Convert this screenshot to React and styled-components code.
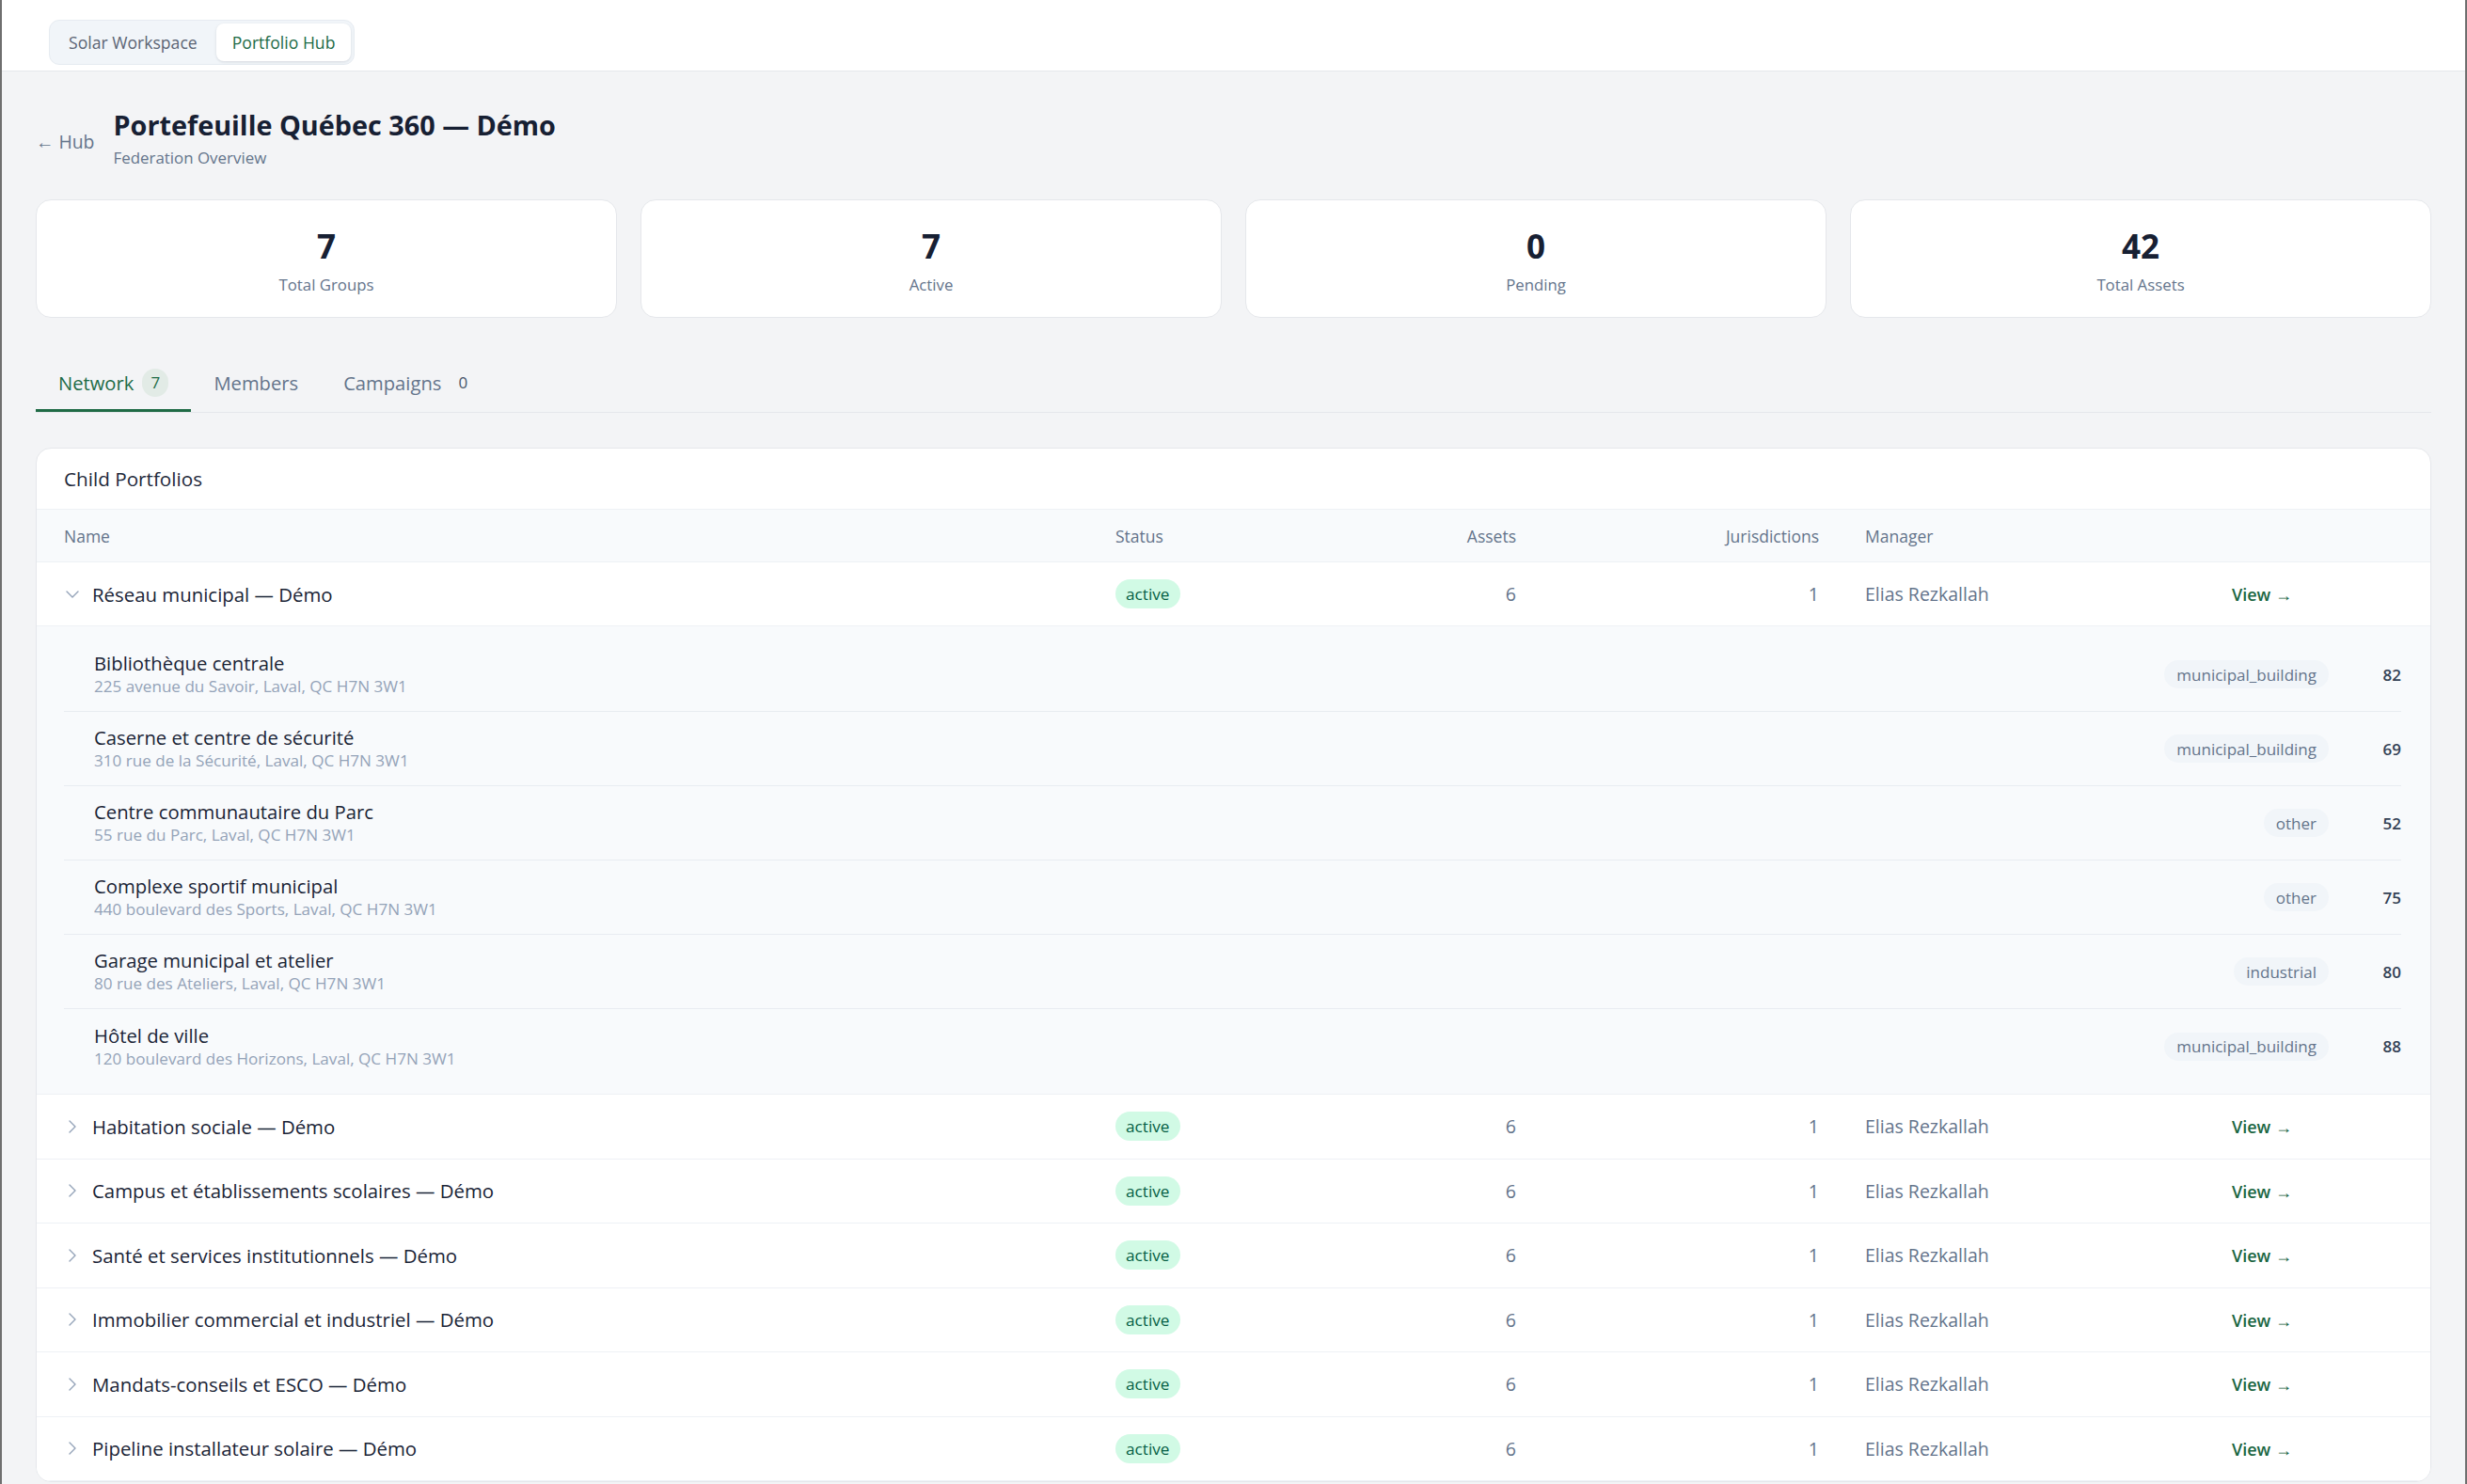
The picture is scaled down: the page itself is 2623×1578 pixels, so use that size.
import React from 'react';
import styled, { createGlobalStyle } from 'styled-components';
import { ChevronDown, ChevronRight } from 'lucide-react';

const GlobalStyle = createGlobalStyle`
  html, body { margin: 0; padding: 0; background: #f3f4f6; overflow: hidden; }
  body { font-family: "Open Sans", "Noto Sans", sans-serif; color: #1e293b; }
  * { box-sizing: border-box; }
`;

const Frame = styled.div`
  height: 1578px;
  border-left: 2px solid #6f6f6f;
  border-right: 2px solid #6f6f6f;
  background: #f3f4f6;
  display: flex;
  flex-direction: column;
  overflow: hidden;
`;

const TopBar = styled.header`
  flex-shrink: 0;
  height: 76px;
  background: #fff;
  border-bottom: 1px solid #e5e7eb;
  padding: 21px 50px 0;
`;

const Segmented = styled.div`
  display: inline-flex;
  gap: 3px;
  padding: 3px;
  height: 48px;
  background: #f1f5f9;
  border: 1px solid #e6ebf1;
  border-radius: 11px;
`;

const SegButton = styled.button`
  border: 0;
  border-radius: 8px;
  padding: 0 17px;
  font-family: inherit;
  font-size: 17.6px;
  font-weight: 500;
  color: ${(p) => (p.$active ? '#1d6b47' : '#5b6474')};
  background: ${(p) => (p.$active ? '#fff' : 'transparent')};
  box-shadow: ${(p) => (p.$active ? '0 1px 3px rgba(15,23,42,0.12)' : 'none')};
`;

const Main = styled.main`
  padding: 36px 36px 0;
  display: flex;
  flex-direction: column;
`;

const PageHeader = styled.div`
  display: flex;
  align-items: center;
  gap: 20px;
  margin-bottom: 31px;
`;

const BackLink = styled.a`
  font-size: 19.4px;
  color: #64748b;
  text-decoration: none;
  padding-top: 8px;
`;

const TitleBlock = styled.div`
  display: flex;
  flex-direction: column;
`;

const Title = styled.h1`
  margin: 0;
  font-size: 28.8px;
  line-height: 42px;
  font-weight: 700;
  color: #172033;
`;

const Subtitle = styled.div`
  font-size: 16.9px;
  line-height: 27px;
  color: #64748b;
`;

const StatGrid = styled.div`
  display: grid;
  grid-template-columns: repeat(4, 1fr);
  gap: 25px;
  margin-bottom: 40px;
`;

const StatCard = styled.div`
  height: 126px;
  background: #fff;
  border: 1px solid #e5e7eb;
  border-radius: 16px;
  display: flex;
  flex-direction: column;
  align-items: center;
  justify-content: center;
  gap: 9px;
  padding-top: 7px;
`;

const StatValue = styled.div`
  font-size: 35px;
  line-height: 40px;
  font-weight: 700;
  color: #172033;
`;

const StatLabel = styled.div`
  font-size: 16.8px;
  line-height: 24px;
  color: #64748b;
`;

const Tabs = styled.nav`
  display: flex;
  border-bottom: 1px solid #e5e7eb;
  margin-bottom: 37px;
`;

const Tab = styled.div`
  height: 60px;
  display: flex;
  align-items: center;
  gap: 9px;
  padding: 0 24px;
  border-bottom: 3px solid ${(p) => (p.$active ? '#1f6b45' : 'transparent')};
  font-size: 20.2px;
  font-weight: 500;
  color: ${(p) => (p.$active ? '#1d6b47' : '#64748b')};
`;

const TabCount = styled.span`
  min-width: 28px;
  height: 30px;
  padding: 0 8px;
  border-radius: 15px;
  display: inline-flex;
  align-items: center;
  justify-content: center;
  font-size: 17px;
  font-weight: 500;
  background: ${(p) => (p.$active ? '#e2ebe6' : 'transparent')};
  color: ${(p) => (p.$active ? '#1d6b47' : '#475569')};
`;

const Card = styled.section`
  background: #fff;
  border: 1px solid #e5e7eb;
  border-radius: 16px;
  overflow: hidden;
`;

const CardHeader = styled.div`
  height: 65px;
  display: flex;
  align-items: center;
  padding: 0 29px;
  border-bottom: 1px solid #eef1f5;
  font-size: 20.7px;
  font-weight: 500;
  color: #1e293b;
`;

const cols = '1118px 300px 126px 322px 439px 1fr';

const HeadRow = styled.div`
  display: grid;
  grid-template-columns: ${cols};
  align-items: center;
  height: 56px;
  padding: 0 30px 0 29px;
  background: #f8fafc;
  border-bottom: 1px solid #eef1f5;
  font-size: 17.5px;
  font-weight: 500;
  color: #64748b;
`;

const HeadCell = styled.div`
  text-align: ${(p) => (p.$right ? 'right' : 'left')};
  padding-left: ${(p) => (p.$pad ? '49px' : '0')};
`;

const Row = styled.div`
  display: grid;
  grid-template-columns: ${cols};
  align-items: center;
  height: ${(p) => p.$h || '68px'};
  padding: 0 30px 0 29px;
  background: #fff;
  border-bottom: 1px solid #eef1f5;
`;

const NameCell = styled.div`
  display: flex;
  align-items: center;
  gap: 9px;
  margin-left: -3px;
  font-size: 20.4px;
  font-weight: 500;
  color: #1a2436;
  svg { flex-shrink: 0; color: #94a3b8; }
`;

const Cell = styled.div`
  text-align: ${(p) => (p.$right ? 'right' : 'left')};
  padding-left: ${(p) => (p.$pad ? '49px' : '0')};
  font-size: 19.5px;
  color: #64748b;
`;

const Badge = styled.span`
  display: inline-flex;
  align-items: center;
  height: 31px;
  padding: 0 11px;
  border-radius: 16px;
  background: #d1fae5;
  color: #065f46;
  font-size: 17.2px;
  font-weight: 500;
`;

const ViewLink = styled.a`
  font-size: 18px;
  font-weight: 600;
  color: #1a6642;
  text-decoration: none;
`;

const SubList = styled.div`
  background: #f8fafc;
  padding: 12px 31px 11px 29px;
  border-bottom: 1px solid #eef1f5;
`;

const SubRow = styled.div`
  height: 79px;
  display: flex;
  align-items: center;
  justify-content: space-between;
  padding-left: 32px;
  border-bottom: 1px solid #e8ecf1;
  &:last-child { border-bottom: 0; }
`;

const SubInfo = styled.div`
  display: flex;
  flex-direction: column;
`;

const SubName = styled.div`
  font-size: 20.3px;
  line-height: 26px;
  font-weight: 500;
  color: #1a2436;
`;

const SubAddress = styled.div`
  font-size: 17.1px;
  line-height: 24px;
  color: #94a3b8;
`;

const SubMeta = styled.div`
  display: flex;
  align-items: center;
`;

const TypePill = styled.span`
  display: inline-flex;
  align-items: center;
  height: 30px;
  padding: 0 13px;
  border-radius: 15px;
  background: #f1f5f9;
  color: #64748b;
  font-size: 17px;
`;

const Score = styled.span`
  width: 77px;
  text-align: right;
  font-size: 17px;
  font-weight: 600;
  color: #334155;
`;

const stats = [
  { v: '7', l: 'Total Groups' },
  { v: '7', l: 'Active' },
  { v: '0', l: 'Pending' },
  { v: '42', l: 'Total Assets' },
];

const assets = [
  ['Bibliothèque centrale', '225 avenue du Savoir, Laval, QC H7N 3W1', 'municipal_building', '82'],
  ['Caserne et centre de sécurité', '310 rue de la Sécurité, Laval, QC H7N 3W1', 'municipal_building', '69'],
  ['Centre communautaire du Parc', '55 rue du Parc, Laval, QC H7N 3W1', 'other', '52'],
  ['Complexe sportif municipal', '440 boulevard des Sports, Laval, QC H7N 3W1', 'other', '75'],
  ['Garage municipal et atelier', '80 rue des Ateliers, Laval, QC H7N 3W1', 'industrial', '80'],
  ['Hôtel de ville', '120 boulevard des Horizons, Laval, QC H7N 3W1', 'municipal_building', '88'],
];

const groups = [
  'Habitation sociale — Démo',
  'Campus et établissements scolaires — Démo',
  'Santé et services institutionnels — Démo',
  'Immobilier commercial et industriel — Démo',
  'Mandats-conseils et ESCO — Démo',
  'Pipeline installateur solaire — Démo',
];

function GroupRow({ name, open }) {
  return (
    <Row $h={open ? '68px' : '68.5px'}>
      <NameCell>
        {open ? <ChevronDown size={24} strokeWidth={1.4} /> : <ChevronRight size={24} strokeWidth={1.4} />}
        {name}
      </NameCell>
      <Cell><Badge>active</Badge></Cell>
      <Cell $right>6</Cell>
      <Cell $right>1</Cell>
      <Cell $pad>Elias Rezkallah</Cell>
      <Cell><ViewLink href="#">View →</ViewLink></Cell>
    </Row>
  );
}

export default function App() {
  return (
    <>
      <GlobalStyle />
      <Frame>
        <TopBar>
          <Segmented>
            <SegButton>Solar Workspace</SegButton>
            <SegButton $active>Portfolio Hub</SegButton>
          </Segmented>
        </TopBar>
        <Main>
          <PageHeader>
            <BackLink href="#">← Hub</BackLink>
            <TitleBlock>
              <Title>Portefeuille Québec 360 — Démo</Title>
              <Subtitle>Federation Overview</Subtitle>
            </TitleBlock>
          </PageHeader>
          <StatGrid>
            {stats.map((s) => (
              <StatCard key={s.l}>
                <StatValue>{s.v}</StatValue>
                <StatLabel>{s.l}</StatLabel>
              </StatCard>
            ))}
          </StatGrid>
          <Tabs>
            <Tab $active>Network <TabCount $active>7</TabCount></Tab>
            <Tab>Members</Tab>
            <Tab>Campaigns <TabCount>0</TabCount></Tab>
          </Tabs>
          <Card>
            <CardHeader>Child Portfolios</CardHeader>
            <HeadRow>
              <HeadCell>Name</HeadCell>
              <HeadCell>Status</HeadCell>
              <HeadCell $right>Assets</HeadCell>
              <HeadCell $right>Jurisdictions</HeadCell>
              <HeadCell $pad>Manager</HeadCell>
              <HeadCell />
            </HeadRow>
            <GroupRow name="Réseau municipal — Démo" open />
            <SubList>
              {assets.map(([n, a, t, s]) => (
                <SubRow key={n}>
                  <SubInfo>
                    <SubName>{n}</SubName>
                    <SubAddress>{a}</SubAddress>
                  </SubInfo>
                  <SubMeta>
                    <TypePill>{t}</TypePill>
                    <Score>{s}</Score>
                  </SubMeta>
                </SubRow>
              ))}
            </SubList>
            {groups.map((g) => (
              <GroupRow key={g} name={g} />
            ))}
          </Card>
        </Main>
      </Frame>
    </>
  );
}
